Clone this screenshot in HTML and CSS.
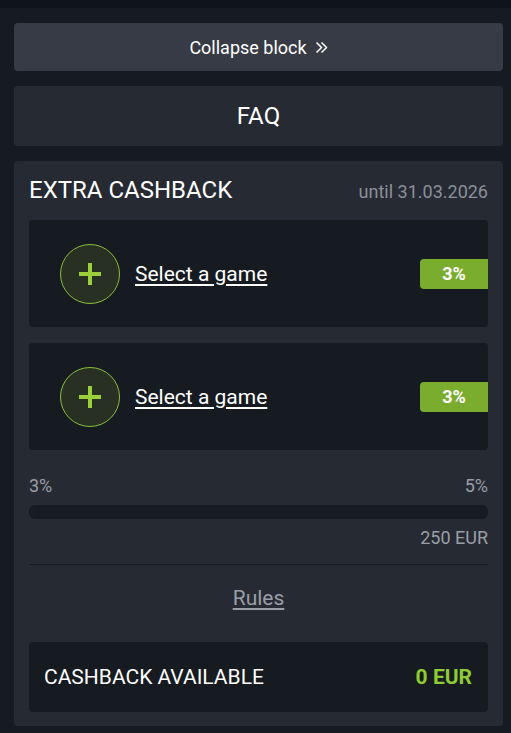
FILE: index.html
```html
<!DOCTYPE html>
<html>
<head>
<meta charset="utf-8">
<link rel="stylesheet" href="styles.css">
</head>
<body>
<div class="topbar"></div>
<div class="wrap">
  <div class="collapse">Collapse block <svg class="chev" width="13" height="13" viewBox="0 0 13 13"><path d="M1.5 1.5l5 5-5 5M6.5 1.5l5 5-5 5" fill="none" stroke="#fff" stroke-width="1.5"/></svg></div>
  <div class="faq">FAQ</div>
  <div class="card">
    <div class="head">
      <div class="title">EXTRA CASHBACK</div>
      <div class="date">until 31.03.2026</div>
    </div>
    <div class="game">
      <div class="plus"><svg width="26" height="26" viewBox="0 0 26 26"><path d="M13 2v22M2 13h22" stroke="#9ccf3c" stroke-width="4"/></svg></div>
      <span class="select">Select a game</span>
      <div class="badge">3%</div>
    </div>
    <div class="game">
      <div class="plus"><svg width="26" height="26" viewBox="0 0 26 26"><path d="M13 2v22M2 13h22" stroke="#9ccf3c" stroke-width="4"/></svg></div>
      <span class="select">Select a game</span>
      <div class="badge">3%</div>
    </div>
    <div class="labels"><span>3%</span><span>5%</span></div>
    <div class="bar"></div>
    <div class="amount">250 EUR</div>
    <div class="divider"></div>
    <div class="rules"><span>Rules</span></div>
    <div class="avail">
      <span>CASHBACK AVAILABLE</span>
      <span class="eur">0 EUR</span>
    </div>
  </div>
</div>
</body>
</html>
```
FILE: styles.css
```css
* { box-sizing: border-box; }
body {
  margin: 0;
  background: #161a21;
  font-family: Roboto, "Liberation Sans", sans-serif;
  color: #fff;
}
.topbar { height: 8px; background: #0f141a; }
.wrap { padding: 15px 8px 0 14px; display: flex; flex-direction: column; gap: 15px; }
.collapse {
  height: 48px;
  background: #363b45;
  border-radius: 4px;
  display: flex; align-items: center; justify-content: center;
  font-size: 18px;
}
.chev { margin-left: 8px; }
.faq {
  height: 60px;
  background: #262a32;
  border-radius: 4px;
  display: flex; align-items: center; justify-content: center;
  font-size: 24px;
}
.card {
  background: #262a32;
  border-radius: 4px;
  padding: 15px 15px 14px;
  display: flex; flex-direction: column;
}
.head { display: flex; justify-content: space-between; align-items: baseline; height: 44px; }
.title { font-size: 24px; line-height: 28px; }
.date { font-size: 18px; color: #8b9099; }
.game {
  height: 107px;
  background: #161a21;
  border-radius: 4px;
  display: flex; align-items: center;
  padding-left: 31px;
  margin-bottom: 16px;
  overflow: hidden;
}
.plus {
  width: 60px; height: 60px;
  border-radius: 50%;
  border: 1px solid #8cbf38;
  background: #273022;
  display: flex; align-items: center; justify-content: center;
}
.select { margin-left: 15px; font-size: 21px; text-decoration: underline; text-underline-offset: 3px; }
.badge {
  margin-left: auto;
  width: 68px; height: 30px;
  background: #7aac2e;
  border-radius: 4px 0 0 4px;
  display: flex; align-items: center; justify-content: center;
  font-weight: bold; font-size: 18px;
}
.labels { display: flex; justify-content: space-between; font-size: 18px; line-height: 20px; color: #9a9ea6; margin-top: 10px; }
.bar { height: 14px; background: #171b22; border-radius: 6px; margin-top: 9px; }
.amount { text-align: right; font-size: 18px; line-height: 20px; color: #9a9ea6; margin-top: 9px; }
.divider { border-top: 1px solid #161a20; margin-top: 16px; }
.rules { text-align: center; font-size: 21px; line-height: 24px; color: #9a9ea6; margin-top: 21px; }
.rules span { text-decoration: underline; text-underline-offset: 3px; }
.avail {
  margin-top: 32px;
  height: 70px;
  background: #161a21;
  border-radius: 4px;
  display: flex; align-items: center; justify-content: space-between;
  padding: 0 16px 0 15px;
  font-size: 21px;
}
.eur { color: #8fcb32; font-weight: bold; }
```
